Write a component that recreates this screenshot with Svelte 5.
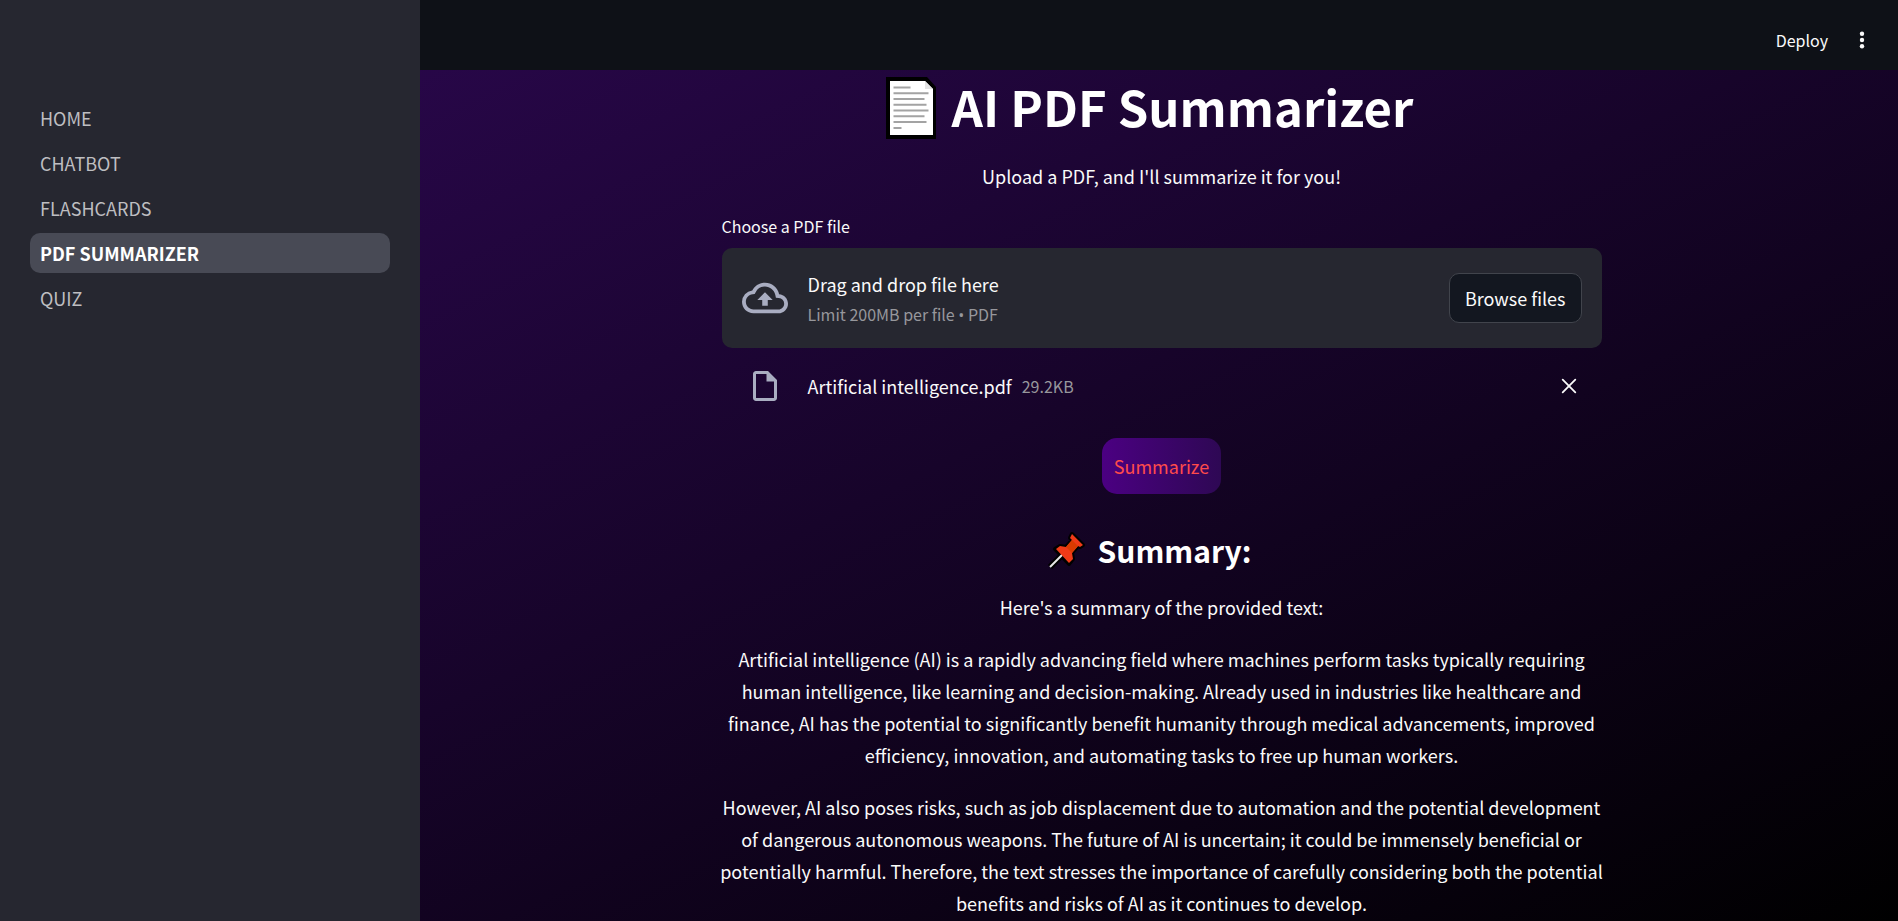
<script lang="ts">
  const pages = ['HOME', 'CHATBOT', 'FLASHCARDS', 'PDF SUMMARIZER', 'QUIZ']

  let currentPage = $state('PDF SUMMARIZER')
  let file = $state<{ name: string, size: string } | null>({
    name: 'Artificial intelligence.pdf',
    size: '29.2KB',
  })
  let fileInput: HTMLInputElement

  const summary = [
    'Here\'s a summary of the provided text:',
    'Artificial intelligence (AI) is a rapidly advancing field where machines perform tasks typically requiring human intelligence, like learning and decision-making. Already used in industries like healthcare and finance, AI has the potential to significantly benefit humanity through medical advancements, improved efficiency, innovation, and automating tasks to free up human workers.',
    'However, AI also poses risks, such as job displacement due to automation and the potential development of dangerous autonomous weapons. The future of AI is uncertain; it could be immensely beneficial or potentially harmful. Therefore, the text stresses the importance of carefully considering both the potential benefits and risks of AI as it continues to develop.',
  ]

  function openPage(event: MouseEvent, page: string) {
    event.preventDefault()
    currentPage = page
  }

  function handleFile() {
    const picked = fileInput.files?.[0]
    if (picked) {
      file = { name: picked.name, size: `${(picked.size / 1024).toFixed(1)}KB` }
    }
  }
</script>

<div class="app">
  <aside class="sidebar">
    <nav>
      {#each pages as page}
        <a
          href="#{page.toLowerCase().replace(' ', '-')}"
          class:active={page === currentPage}
          aria-current={page === currentPage ? 'page' : undefined}
          onclick={event => openPage(event, page)}
        >{page}</a>
      {/each}
    </nav>
  </aside>

  <div class="view">
    <header>
      <button type="button" class="deploy">Deploy</button>
      <button type="button" class="menu" aria-label="Main menu">
        <svg width="20" height="20" viewBox="0 0 20 20" fill="currentColor" aria-hidden="true">
          <circle cx="10" cy="3.700" r="2.200" />
          <circle cx="10" cy="10" r="2.200" />
          <circle cx="10" cy="16.300" r="2.200" />
        </svg>
      </button>
    </header>

    <main>
      <div class="column">
        <h1>
          <svg width="50" height="62" viewBox="0 0 50 62" aria-hidden="true">
            <path d="M0 0h41l9 10v52H0z" fill="#000" />
            <path d="M4 4h35l8 8v46H4z" fill="#fff" />
            <path d="M39 4l8 8h-8z" fill="#e3e3e3" />
            <path d="M7.500 10.500h17M7.500 16.300h35M7.500 22h31M7.500 27.700h33M7.500 33.500h35M7.500 39.300h31M7.500 45h33M7.500 51h8" stroke="#a3a3a3" stroke-width="2" />
          </svg>
          AI PDF Summarizer
        </h1>
        <p class="intro">Upload a PDF, and I'll summarize it for you!</p>

        <label for="pdf-file">Choose a PDF file</label>
        <div class="dropzone">
          <svg class="cloud" width="46" height="46" viewBox="0 0 24 24" fill="currentColor" aria-hidden="true">
            <path d="M19.35 10.04A7.49 7.49 0 0 0 12 4C9.110 4 6.600 5.640 5.350 8.040A5.994 5.994 0 0 0 0 14c0 3.310 2.690 6 6 6h13c2.760 0 5-2.240 5-5 0-2.640-2.050-4.780-4.650-4.960zM19 18H6c-2.210 0-4-1.790-4-4 0-2.050 1.530-3.760 3.560-3.970l1.070-.11.5-.95A5.469 5.469 0 0 1 12 6c2.620 0 4.880 1.860 5.390 4.430l.3 1.500 1.530.11A2.980 2.980 0 0 1 22 15c0 1.650-1.350 3-3 3zM8 13h2.550v3h2.900v-3H16l-4-4z" />
          </svg>
          <div class="hint">
            <span>Drag and drop file here</span>
            <small>Limit 200MB per file <span class="bullet">•</span> PDF</small>
          </div>
          <input id="pdf-file" type="file" accept=".pdf" bind:this={fileInput} onchange={handleFile} />
          <button type="button" class="browse" onclick={() => fileInput.click()}>Browse files</button>
        </div>

        {#if file}
          <div class="file">
            <svg class="page-icon" width="36" height="36" viewBox="0 0 24 24" fill="currentColor" aria-hidden="true">
              <path d="M14 2H6c-1.100 0-2 .9-2 2v16c0 1.100.89 2 1.990 2H18c1.100 0 2-.9 2-2V8l-6-6zM6 20V4h7v5h5v11H6z" />
            </svg>
            <span class="name">{file.name}</span>
            <small>{file.size}</small>
            <button type="button" class="remove" aria-label="Remove file" onclick={() => (file = null)}>
              <svg width="16" height="16" viewBox="0 0 16 16" fill="none" stroke="currentColor" stroke-width="1.800" stroke-linecap="round" aria-hidden="true">
                <path d="M1.700 1.700l12.600 12.600M14.300 1.700L1.700 14.300" />
              </svg>
            </button>
          </div>
        {/if}

        <button type="button" class="summarize">Summarize</button>

        <h2>
          <svg width="38" height="38" viewBox="0 0 38 38" stroke-linejoin="round" aria-hidden="true">
            <path d="M2 36L16 22" stroke="#000" stroke-width="6" />
            <path d="M24 3l11 11-3 2-2-1-6 7 1 6-4 5L7 18l5-3 6 1 6-7-2-2z" fill="#000" stroke="#000" stroke-width="4" />
            <path d="M2 36L16 22" stroke="#e8e8e8" stroke-width="2" />
            <path d="M24 3l11 11-3 2-2-1-6 7 1 6-4 4L8 18l4-3 6 1 6-7-2-2z" fill="#f03a17" />
            <path d="M24 9l6 6-6 7-6-6z" fill="#da3b01" />
          </svg>
          Summary:
        </h2>
        {#each summary as paragraph}
          <p>{paragraph}</p>
        {/each}
      </div>
    </main>
  </div>
</div>

<style>
:global(body) {
  background: #000;
}

.app {
  display: flex;
  height: 100vh;
  overflow: hidden;
  background: linear-gradient(to bottom right, #2e0854, #000);
  color: #fafafa;
  font-family: 'Source Sans Pro', 'Noto Sans CJK SC', sans-serif;
  font-size: 18px;
  line-height: 32px;
}

button {
  font: inherit;
  color: inherit;
  border: none;
  background: none;
  padding: 0;
  cursor: pointer;
}

svg {
  flex: none;
}

.sidebar {
  flex: none;
  box-sizing: border-box;
  width: 420px;
  padding: 98px 30px 0;
  background: #262730;
}

nav {
  display: flex;
  flex-direction: column;
  gap: 5px;
}

nav a {
  padding: 4px 10px;
  border-radius: 10px;
  color: #bebec1;
  text-decoration: none;
}

nav a.active {
  background: #484a55;
  color: #fff;
  font-weight: 700;
}

.view {
  flex: 1;
  display: flex;
  flex-direction: column;
  min-width: 0;
}

header {
  flex: none;
  display: flex;
  align-items: center;
  justify-content: flex-end;
  gap: 24px;
  box-sizing: border-box;
  height: 70px;
  padding: 10px 26px 0 0;
  background: #0e1117;
}

.deploy {
  font-size: 16px;
}

.menu {
  display: flex;
}

main {
  flex: 1;
  min-height: 0;
  padding-left: 5px;
  overflow: hidden;
}

.column {
  max-width: 880px;
  margin: 0 auto;
  text-align: center;
}

h1,
h2 {
  display: flex;
  justify-content: center;
  box-sizing: border-box;
  margin: 0;
  padding-right: 24px;
  color: #fff;
  font-weight: 700;
}

h1 {
  gap: 16px;
  height: 74px;
  padding-top: 7px;
  font-size: 49px;
  line-height: 58px;
}

h2 {
  align-items: center;
  gap: 12px;
  height: 72px;
  margin: 20px 0 5px;
  font-size: 30px;
}

p {
  margin: 0 -4px 20px;
}

.intro {
  margin-top: 16px;
}

label {
  display: block;
  margin-bottom: 8px;
  font-size: 16px;
  line-height: 28px;
  text-align: left;
}

.dropzone {
  display: flex;
  align-items: center;
  gap: 20px;
  padding: 20px;
  border-radius: 10px;
  background: #262730;
}

.dropzone input {
  display: none;
}

.cloud,
.page-icon {
  color: #a9adc1;
}

.hint {
  display: flex;
  flex: 1;
  flex-direction: column;
  gap: 1px;
  text-align: left;
}

small {
  color: #97979c;
  font-size: 16px;
  line-height: 26px;
}

.bullet {
  font-family: 'Open Sans', sans-serif;
}

.browse {
  padding: 8px 15px;
  border: 1px solid #41444c;
  border-radius: 10px;
  background: #131720;
}

.file {
  display: flex;
  align-items: center;
  gap: 10px;
  padding: 20px 25px;
  text-align: left;
}

.file .name {
  margin-left: 15px;
}

.remove {
  display: flex;
  margin-left: auto;
}

.summarize {
  display: block;
  margin: 14px auto 0;
  padding: 12px;
  border-radius: 15px;
  background: linear-gradient(to right, #4b0082, #2e0854);
  color: #ff4b4b;
}
</style>
